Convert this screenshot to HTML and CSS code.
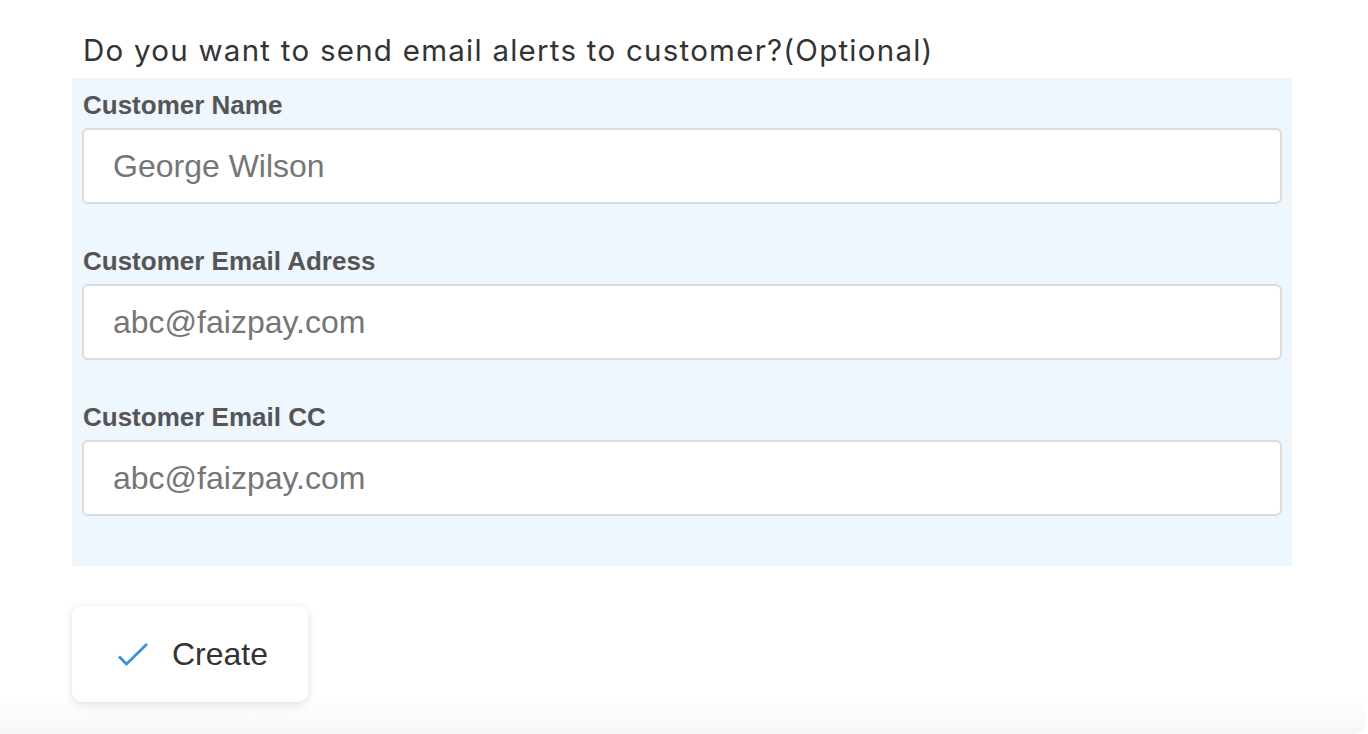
FILE: index.html
```html
<!DOCTYPE html>
<html>
<head>
<meta charset="utf-8">
<link rel="stylesheet" href="styles.css">
</head>
<body>
<div class="card">
  <h2 class="title">Do you want to send email alerts to customer?(Optional)</h2>
  <div class="panel">
    <div class="field">
      <label class="label">Customer Name</label>
      <input class="input" type="text" placeholder="George Wilson">
    </div>
    <div class="field">
      <label class="label">Customer Email Adress</label>
      <input class="input" type="text" placeholder="abc@faizpay.com">
    </div>
    <div class="field">
      <label class="label">Customer Email CC</label>
      <input class="input" type="text" placeholder="abc@faizpay.com">
    </div>
  </div>
  <button class="btn" type="button">
    <svg class="check" width="32" height="24" viewBox="0 0 32 24"><path d="M2 13.5 L9.5 21 L30 1" fill="none" stroke="#3d8fe0" stroke-width="2.8"/></svg>
    <span>Create</span>
  </button>
</div>
</body>
</html>
```
FILE: styles.css
```css
html, body { margin: 0; padding: 0; background: #ffffff; }
.card {
  height: 734px;
  box-sizing: border-box;
  padding: 28px 74px 0 72px;
  background: linear-gradient(to bottom, #ffffff 0, #ffffff 698px, #f6f6f6 734px);
  border-bottom-right-radius: 12px;
  margin-right: 2px;
}
.title {
  margin: 0 0 0 11px;
  font-family: Inter, "Liberation Sans", sans-serif;
  font-weight: 400;
  font-size: 29.5px;
  line-height: 44px;
  height: 50px;
  color: #333333;
  letter-spacing: 1.25px;
  white-space: nowrap;
}
.panel {
  background: #eef6fe;
  padding: 11px 10px 50px 10px;
  display: flex;
  flex-direction: column;
  gap: 41px;
}
.field { display: flex; flex-direction: column; }
.label {
  font-family: "Liberation Sans", Arial, sans-serif;
  font-weight: 700;
  font-size: 26px;
  line-height: 32px;
  color: #555555;
  margin: 0 0 7px 1px;
}
.input {
  box-sizing: border-box;
  height: 76px;
  width: 100%;
  border: 2px solid #dcdcdc;
  border-radius: 6px;
  background: #ffffff;
  padding: 0 0 0 29px;
  font-family: "Liberation Sans", Arial, sans-serif;
  font-size: 32px;
  color: #333;
  outline: none;
}
.input::placeholder { color: #767676; }
.btn {
  margin-top: 40px;
  width: 236px;
  height: 96px;
  border: none;
  border-radius: 10px;
  background: #ffffff;
  box-shadow: 0 2px 10px rgba(0,0,0,0.13);
  display: flex;
  align-items: center;
  padding: 0 0 0 45px;
  gap: 23px;
  font-family: "Liberation Sans", Arial, sans-serif;
  font-size: 32px;
  color: #333333;
  cursor: pointer;
}
.check { display: block; margin-top: 2px; }
```
